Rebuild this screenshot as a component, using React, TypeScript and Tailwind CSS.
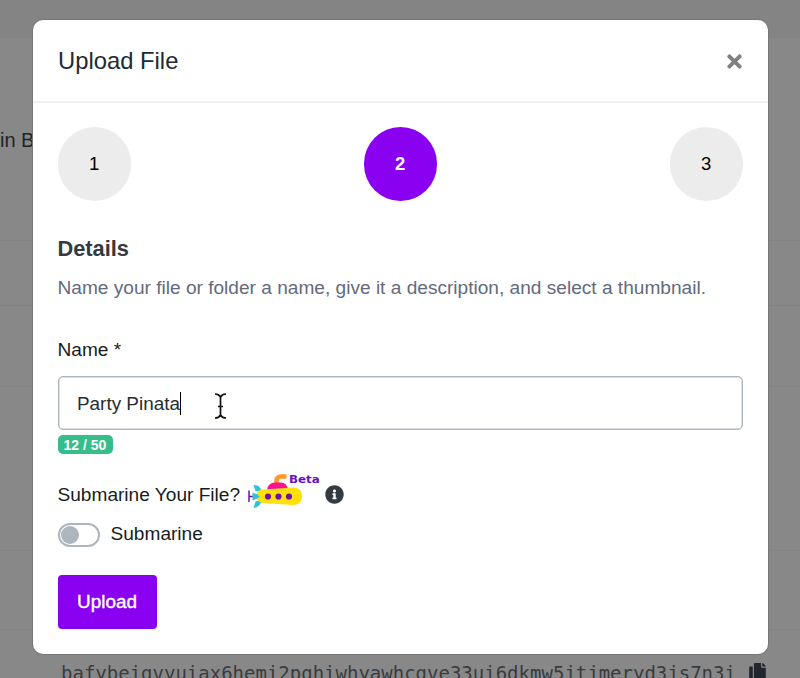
import React from "react";
import { FaTimes, FaInfoCircle, FaCopy } from "react-icons/fa";

const cid = "bafybeigvyuiax6hemi2pghiwhyawhcgve33ui6dkmw5jtjmeryd3js7n3i";

function Page() {
  return (
    <div className="flex h-full flex-col bg-[#888888] text-[#1f2429]">
      <div className="h-[38px] shrink-0 bg-[#848484]" />
      <div className="flex h-[203px] shrink-0 items-center border-b border-[#838383]">
        <span className="mt-[2px] whitespace-nowrap text-[20px] leading-none">in Batches</span>
      </div>
      <div className="h-[65px] shrink-0 border-b border-[#808184]" />
      <div className="h-[81px] shrink-0 border-b border-[#848484]" />
      <div className="h-[164px] shrink-0 border-b border-[#848484]" />
      <div className="h-[79px] shrink-0 border-b border-[#848484]" />
      <div className="flex items-start pl-[61px] pt-[31px]">
        <span className="w-[688px] whitespace-nowrap font-['DejaVu_Sans_Mono',monospace] text-[19px] leading-[24px] text-[#383c40]">
          {cid}
        </span>
        <FaCopy className="mt-[2px] h-[19px] w-[17px] text-[#20262b]" />
      </div>
    </div>
  );
}

function Submarine() {
  return (
    <svg className="h-[40px] w-[56px]" viewBox="0 0 56 40" fill="none">
      <path d="M28.500 18V13Q28.500 7.500 33 7.500H38.500" stroke="#ff9923" strokeWidth="4.600" />
      <path d="M19 21Q20 13.500 27 13.500H33Q39 13.500 40 21Z" fill="#fc1192" />
      <path d="M1 21.500V33M1 27.500H8" stroke="#6a12a8" strokeWidth="1.500" />
      <path d="M5.500 16Q13 16 13.500 23L7.500 22ZM5.500 39Q13 38 13.500 31L7.500 32.500Z" fill="#35bfd3" />
      <path d="M14 20.500L46 18.500Q54 19 54 27.500Q54 36 45 36L14 34Q8 31 8 27Q8 22 14 20.500Z" fill="#ffe00a" />
      <path d="M4.500 23.500Q9 25 12 27.500Q9 30 4.500 31.500Z" fill="#35bfd3" />
      <circle cx="20" cy="27.500" r="3.100" fill="#7213a0" />
      <circle cx="30.500" cy="27.500" r="3.100" fill="#7213a0" />
      <circle cx="41" cy="27.500" r="3.100" fill="#7213a0" />
    </svg>
  );
}

function Step({ n, active }: { n: number; active?: boolean }) {
  return (
    <div
      className={`flex size-[73.5px] items-center justify-center rounded-full text-[18.5px] ${
        active ? "bg-[#8a00f0] font-bold text-white" : "bg-[#ececec] text-black"
      }`}
    >
      {n}
    </div>
  );
}

export default function App() {
  return (
    <div className="relative h-[678px] w-[800px] overflow-hidden font-['Liberation_Sans',Arial,sans-serif]">
      <Page />
      <div className="absolute left-[33px] top-[20px] flex h-[634px] w-[735px] flex-col rounded-[10px] bg-white shadow-[0_0_0_1px_#777]">
        <header className="flex h-[83px] shrink-0 items-center justify-between border-b-2 border-[#edf1f5] pl-[25px] pr-[23px]">
          <h1 className="text-[23.8px] text-[#212a32]">Upload File</h1>
          <FaTimes className="mt-px size-[21px] text-[#808080]" />
        </header>
        <main className="flex flex-col items-start pl-[24.5px] pr-[25px] pt-[24px] text-[19.1px] leading-[28px] text-[#171c22]">
          <div className="flex w-full justify-between">
            <Step n={1} />
            <Step n={2} active />
            <Step n={3} />
          </div>
          <h2 className="mt-[34.5px] text-[21.8px] font-bold text-[#343a40]">Details</h2>
          <p className="mt-[11px] whitespace-nowrap text-[#646a7c]">
            Name your file or folder a name, give it a description, and select a thumbnail.
          </p>
          <label className="mt-[34px]">Name *</label>
          <div className="mt-[12px] flex h-[54px] w-full items-center rounded-[5px] border border-[#adb5bd] pl-[18.5px] text-[#272c31] shadow-[inset_0_0_0_0.5px_#b5bdc5]">
            <span className="mt-px text-[18.9px]">Party Pinata</span>
            <span className="h-[23px] w-px bg-black" />
            <svg className="ml-[33px] mt-[5px] h-[28px] w-[13px]" viewBox="0 0 13 28" fill="none" stroke="#111" strokeWidth="1.700">
              <path d="M1 2Q5 2 6.500 5Q8 2 12 2M6.500 5V23M1 26Q5 26 6.500 23Q8 26 12 26M4 14.500H9" />
            </svg>
          </div>
          <span className="mt-[5px] flex h-[19px] w-[55px] items-center justify-center rounded-[5px] bg-[#35be89] text-[14px] font-bold leading-none text-white">
            12 / 50
          </span>
          <div className="mt-[14px] flex h-[50px] items-center">
            <span className="mt-[3px] whitespace-nowrap">Submarine Your File?</span>
            <div className="relative ml-[8px] mt-[-8px]">
              <Submarine />
              <span className="absolute left-[41px] top-[4px] origin-left scale-x-[1.08] font-['DejaVu_Sans',sans-serif] text-[11px] font-bold leading-[14px] text-[#6b0fc0]">
                Beta
              </span>
            </div>
            <FaInfoCircle className="ml-[21px] mt-[2px] size-[19px] text-[#343a40]" />
          </div>
          <div className="mt-[3px] flex items-center">
            <span className="flex h-[24px] w-[42px] items-center rounded-full border-2 border-[#adb5bd] pl-px">
              <span className="size-[18px] rounded-full bg-[#adb5bd]" />
            </span>
            <span className="ml-[11px] mt-[-1px]">Submarine</span>
          </div>
          <button className="mt-[27px] h-[54px] w-[99px] rounded-[4px] bg-[#8a00f0] text-[18.9px] text-white [-webkit-text-stroke:0.4px_white]">
            Upload
          </button>
        </main>
      </div>
    </div>
  );
}
